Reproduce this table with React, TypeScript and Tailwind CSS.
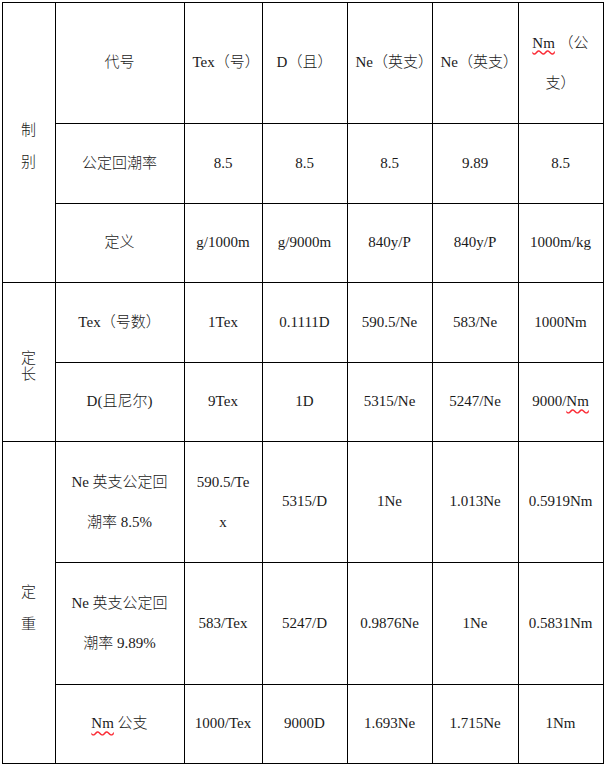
const cell = 'border border-black text-center align-middle px-2';

const Nm = () => <span className="underline decoration-wavy decoration-red-500 underline-offset-2">Nm</span>;

export default function App() {
    return (
        <div className="min-h-screen bg-white pl-[1.5px] pt-[1.5px] text-[15px] text-[#1a1a1a] font-light [font-family:'Liberation_Serif','Noto_Sans_CJK_SC',serif]">
            <table className="table-fixed border-collapse w-[601px]">
                <colgroup>
                    <col className="w-[53px]" />
                    <col className="w-[129px]" />
                    <col className="w-[78px]" />
                    <col className="w-[85px]" />
                    <col className="w-[85px]" />
                    <col className="w-[86px]" />
                    <col className="w-[85px]" />
                </colgroup>
                <tbody>
                    <tr className="h-[121px]">
                        <td rowSpan={3} className={`${cell} px-0 leading-[32px]`}>
                            <div className="pt-2">制<br />别</div>
                        </td>
                        <td className={cell}>代号</td>
                        <td className={`${cell} px-0 whitespace-nowrap`}>Tex（号）</td>
                        <td className={`${cell} px-0 whitespace-nowrap`}>D（且）</td>
                        <td className={`${cell} px-0 whitespace-nowrap`}>Ne（英支）</td>
                        <td className={`${cell} px-0 whitespace-nowrap`}>Ne（英支）</td>
                        <td className={`${cell} leading-[40px] whitespace-nowrap`}>
                            <Nm /> （公<br />支）
                        </td>
                    </tr>
                    <tr className="h-[80px]">
                        <td className={cell}>公定回潮率</td>
                        <td className={cell}>8.5</td>
                        <td className={cell}>8.5</td>
                        <td className={cell}>8.5</td>
                        <td className={cell}>9.89</td>
                        <td className={cell}>8.5</td>
                    </tr>
                    <tr className="h-[79px]">
                        <td className={cell}>定义</td>
                        <td className={`${cell} px-0`}>g/1000m</td>
                        <td className={`${cell} px-0`}>g/9000m</td>
                        <td className={cell}>840y/P</td>
                        <td className={cell}>840y/P</td>
                        <td className={`${cell} px-0`}>1000m/kg</td>
                    </tr>
                    <tr className="h-[80px]">
                        <td rowSpan={2} className={`${cell} px-0 leading-[16px]`}>
                            <div className="pt-2">定<br />长</div>
                        </td>
                        <td className={cell}>Tex（号数）</td>
                        <td className={cell}>1Tex</td>
                        <td className={`${cell} px-0`}>0.1111D</td>
                        <td className={`${cell} px-0`}>590.5/Ne</td>
                        <td className={cell}>583/Ne</td>
                        <td className={`${cell} px-0`}>1000Nm</td>
                    </tr>
                    <tr className="h-[79px]">
                        <td className={cell}>D(且尼尔)</td>
                        <td className={cell}>9Tex</td>
                        <td className={cell}>1D</td>
                        <td className={`${cell} px-0`}>5315/Ne</td>
                        <td className={`${cell} px-0`}>5247/Ne</td>
                        <td className={`${cell} px-0`}>
                            9000/<Nm />
                        </td>
                    </tr>
                    <tr className="h-[121px]">
                        <td rowSpan={3} className={`${cell} px-0 leading-[32px]`}>
                            <div className="pt-3">定<br />重</div>
                        </td>
                        <td className={`${cell} leading-[40px] whitespace-nowrap`}>
                            Ne 英支公定回<br />潮率 8.5%
                        </td>
                        <td className={`${cell} px-0 leading-[40px]`}>
                            590.5/Te<br />x
                        </td>
                        <td className={cell}>5315/D</td>
                        <td className={cell}>1Ne</td>
                        <td className={`${cell} px-0`}>1.013Ne</td>
                        <td className={`${cell} px-0`}>0.5919Nm</td>
                    </tr>
                    <tr className="h-[122px]">
                        <td className={`${cell} leading-[40px] whitespace-nowrap`}>
                            Ne 英支公定回<br />潮率 9.89%
                        </td>
                        <td className={`${cell} px-0`}>583/Tex</td>
                        <td className={cell}>5247/D</td>
                        <td className={`${cell} px-0`}>0.9876Ne</td>
                        <td className={cell}>1Ne</td>
                        <td className={`${cell} px-0`}>0.5831Nm</td>
                    </tr>
                    <tr className="h-[79px]">
                        <td className={cell}>
                            <Nm /> 公支
                        </td>
                        <td className={`${cell} px-0`}>1000/Tex</td>
                        <td className={cell}>9000D</td>
                        <td className={`${cell} px-0`}>1.693Ne</td>
                        <td className={`${cell} px-0`}>1.715Ne</td>
                        <td className={cell}>1Nm</td>
                    </tr>
                </tbody>
            </table>
        </div>
    );
}
